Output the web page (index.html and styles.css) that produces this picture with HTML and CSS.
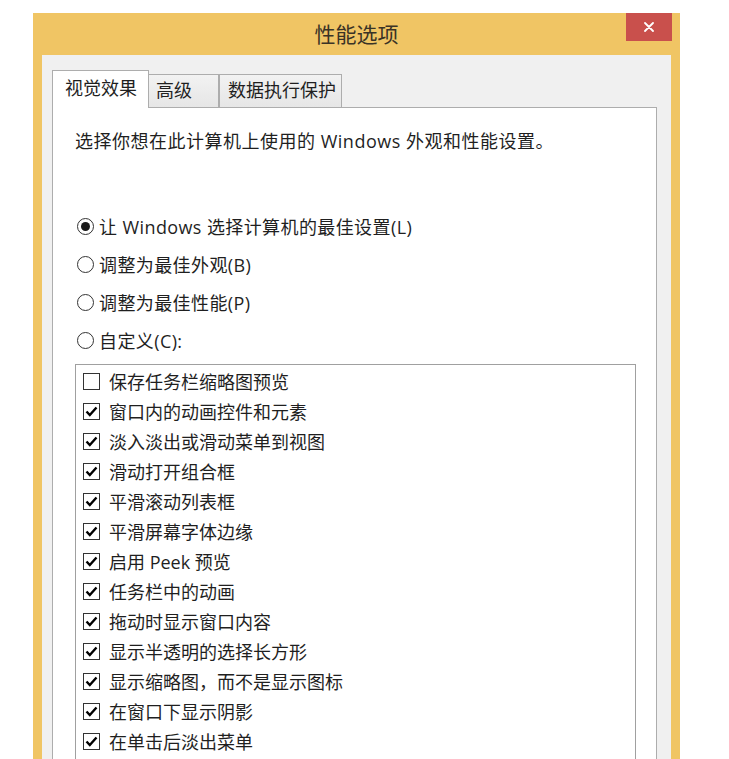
FILE: index.html
```html
<!DOCTYPE html>
<html lang="zh-CN">
<head>
  <meta charset="UTF-8" />
  <title>性能选项</title>
  <link rel="stylesheet" href="styles.css">
</head>
<body>

<div class="window">
  <div class="titlebar">
    <div class="title">性能选项</div>
    <div class="close">
      <svg width="10" height="10" viewBox="0 0 10 10"><path d="M1 1 L9 9 M9 1 L1 9" stroke="#fff" stroke-width="1.8" stroke-linecap="round"/></svg>
    </div>
  </div>

  <div class="client">
    <div class="tabs">
      <div class="tab active">视觉效果</div>
      <div class="tab t2">高级</div>
      <div class="tab t3">数据执行保护</div>
    </div>

    <div class="panel">
      <div class="desc">选择你想在此计算机上使用的 Windows 外观和性能设置。</div>

      <div class="radios">
        <div class="radio-row"><span class="radio on"></span>让 Windows 选择计算机的最佳设置(L)</div>
        <div class="radio-row"><span class="radio"></span>调整为最佳外观(B)</div>
        <div class="radio-row"><span class="radio"></span>调整为最佳性能(P)</div>
        <div class="radio-row"><span class="radio"></span>自定义(C):</div>
      </div>

      <div class="listbox" id="list"></div>
    </div>
  </div>
</div>

<script>
const items = [
  ['保存任务栏缩略图预览', false],
  ['窗口内的动画控件和元素', true],
  ['淡入淡出或滑动菜单到视图', true],
  ['滑动打开组合框', true],
  ['平滑滚动列表框', true],
  ['平滑屏幕字体边缘', true],
  ['启用 Peek 预览', true],
  ['任务栏中的动画', true],
  ['拖动时显示窗口内容', true],
  ['显示半透明的选择长方形', true],
  ['显示缩略图，而不是显示图标', true],
  ['在窗口下显示阴影', true],
  ['在单击后淡出菜单', true]
];

const tick = '<svg width="15" height="15" viewBox="0 0 15 15"><path d="M2.5 7.5 L5.8 11 L12.5 3.5" fill="none" stroke="#000" stroke-width="2.4"/></svg>';

const list = document.getElementById('list');
items.forEach(([label, checked]) => {
  const row = document.createElement('div');
  row.className = 'check-row';
  row.innerHTML = `<span class="checkbox">${checked ? tick : ''}</span>${label}`;
  list.appendChild(row);
});
</script>
</body>
</html>
```

FILE: styles.css
```css
body {
  margin: 0;
  background: #fff;
  font-family: "Open Sans", "Noto Sans CJK SC", sans-serif;
  color: #1f1f1f;
  overflow: hidden;
  height: 759px;
}
.window {
  margin: 13px 0 0 33px;
  width: 647px;
  height: 760px;
  background: #f0c564;
  display: flex;
  flex-direction: column;
  overflow: hidden;
}
.titlebar {
  position: relative;
  flex-shrink: 0;
  height: 42px;
  display: flex;
  align-items: center;
  justify-content: center;
}
.title {
  font-family: "Noto Sans CJK SC", sans-serif;
  font-size: 21px;
  color: #3a3326;
  margin-top: -2px;
}
.close {
  position: absolute;
  top: 0;
  right: 8px;
  width: 46px;
  height: 28px;
  background: #c9504c;
  display: flex;
  align-items: center;
  justify-content: center;
}
.client {
  flex: 1;
  min-height: 0;
  margin: 0 9px;
  background: #f0f0f0;
  padding: 15px 14px 0 10px;
  display: flex;
  flex-direction: column;
}
.tabs {
  display: flex;
  flex-shrink: 0;
  align-items: flex-end;
  height: 37px;
  font-size: 18px;
  position: relative;
  z-index: 1;
}
.tab {
  height: 33px;
  line-height: 31px;
  border: 1px solid #adadad;
  border-bottom: none;
  background: linear-gradient(#f2f2f2, #e6e6e6);
  box-sizing: border-box;
  padding: 0 8px;
}
.tab.active {
  height: 38px;
  line-height: 34px;
  background: #fff;
  padding: 0 11px 0 12px;
  margin-bottom: -1px;
}
.tab.t2 {
  border-left: none;
  padding: 0 26px 0 7px;
}
.tab.t3 {
  border-left: 1px solid #adadad;
  padding: 0 5px 0 8px;
}
.panel {
  flex: 1;
  min-height: 0;
  background: #fff;
  border: 1px solid #adadad;
  padding: 20px 0 0 22px;
  font-size: 18px;
}
.desc {
  line-height: 26px;
  letter-spacing: 0.5px;
}
.radios {
  margin-top: 53px;
  padding-left: 2px;
  letter-spacing: 0.4px;
}
.radio-row {
  display: flex;
  align-items: center;
  height: 38px;
  gap: 5px;
}
.radio {
  width: 17px;
  height: 17px;
  box-sizing: border-box;
  border: 1px solid #333;
  border-radius: 50%;
  background: #fff;
  display: flex;
  align-items: center;
  justify-content: center;
}
.radio.on::after {
  content: "";
  width: 9px;
  height: 9px;
  border-radius: 50%;
  background: #1a1a1a;
}
.listbox {
  margin-top: 5px;
  width: 561px;
  height: 420px;
  border: 1px solid #a0a0a0;
  box-sizing: border-box;
  padding: 1px 0 0 7px;
}
.check-row {
  display: flex;
  align-items: center;
  height: 30px;
  gap: 9px;
}
.checkbox {
  width: 17px;
  height: 17px;
  box-sizing: border-box;
  border: 1px solid #333;
  background: #fff;
  display: flex;
  align-items: center;
  justify-content: center;
}
```
